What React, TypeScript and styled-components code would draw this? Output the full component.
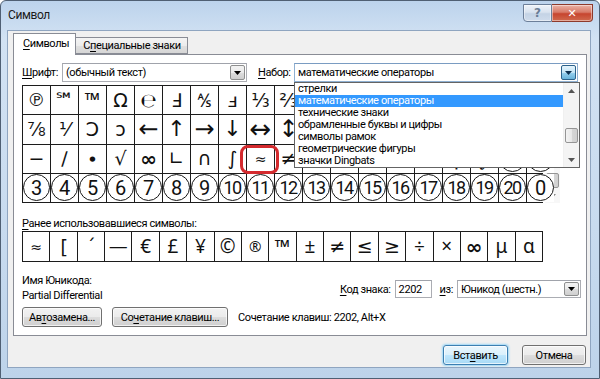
import React from 'react';
import styled, { createGlobalStyle } from 'styled-components';

const UI = `Roboto, "Noto Sans", "DejaVu Sans", sans-serif`;
const SYM = `"DejaVu Sans", "Noto Sans", sans-serif`;

const GlobalStyle = createGlobalStyle`
  html, body { margin: 0; padding: 0; background: #ffffff; }
  * { box-sizing: border-box; }
  u { text-decoration-thickness: 1px; text-underline-offset: 2px; }
`;

const Window = styled.div`
  position: relative;
  width: 600px;
  height: 379px;
  border: 1px solid #4f5f73;
  border-radius: 6px 6px 0 0;
  background: linear-gradient(180deg, #bcd3ec 0%, #d2e2f3 10%, #c8dbef 60%, #bdd3ea 100%);
  padding: 0 8px 10px 6px;
  display: flex;
  flex-direction: column;
  font-family: ${UI};
  font-size: 11px;
  letter-spacing: -0.4px;
  color: #000;
`;

const TitleBar = styled.div`
  height: 29px;
  display: flex;
  align-items: flex-start;
`;

const Title = styled.div`
  margin: 7px 0 0 1px;
  font-size: 12px;
  color: #1a1a1a;
`;

const CaptionGroup = styled.div`
  margin-left: auto;
  margin-right: -2px;
  margin-top: 3px;
  display: flex;
`;

const CaptionButton = styled.div<{ $close?: boolean }>`
  width: ${p => (p.$close ? 41 : 29)}px;
  height: 18px;
  display: flex;
  align-items: center;
  justify-content: center;
  border: 1px solid ${p => (p.$close ? '#8d3a2c' : '#6c7f99')};
  border-left-width: ${p => (p.$close ? 0 : 1)}px;
  border-radius: ${p => (p.$close ? '0 0 4px 0' : '0 0 0 4px')};
  background: ${p =>
    p.$close
      ? 'linear-gradient(180deg, #eab2a6 0%, #d87a68 45%, #c7452f 55%, #d06a4e 100%)'
      : 'linear-gradient(180deg, #eef3f9 0%, #d9e3ef 45%, #c4d3e5 55%, #cfdcec 100%)'};
  color: ${p => (p.$close ? '#ffffff' : '#6a7d96')};
  font-family: ${SYM};
  font-weight: bold;
  letter-spacing: 0;
  font-size: ${p => (p.$close ? 11 : 12)}px;
  box-shadow: inset 0 0 0 1px rgba(255, 255, 255, 0.45);
`;

const Client = styled.div`
  flex: 1;
  background: #f0f0f0;
  border: 1px solid #8fa5c0;
  padding: 2px 3px 0 5px;
  display: flex;
  flex-direction: column;
`;

const TabStrip = styled.div`
  height: 21px;
  display: flex;
  align-items: flex-end;
  position: relative;
  z-index: 1;
`;

const Tab = styled.div<{ $active?: boolean }>`
  height: ${p => (p.$active ? 22 : 17)}px;
  margin-bottom: ${p => (p.$active ? -1 : 0)}px;
  padding: ${p => (p.$active ? '0 6px 2px 9px' : '0 6px 0 7px')};
  border: 1px solid #898c95;
  border-bottom: ${p => (p.$active ? 'none' : '1px solid #898c95')};
  border-left: ${p => (p.$active ? '1px solid #898c95' : 'none')};
  background: ${p => (p.$active ? '#ffffff' : 'linear-gradient(180deg, #f4f4f4 0%, #ececec 50%, #e0e0e0 51%, #d6d6d6 100%)')};
  display: flex;
  align-items: center;
  white-space: nowrap;
`;

const Panel = styled.div`
  height: 282px;
  border: 1px solid #898c95;
  background: #ffffff;
  padding: 8px 5px 0 8px;
  display: flex;
  flex-direction: column;
`;

const FontRow = styled.div`
  height: 19px;
  display: flex;
  align-items: center;
`;

const FieldLabel = styled.span<{ $w: number; $ml?: number }>`
  width: ${p => p.$w}px;
  margin-left: ${p => p.$ml ?? 0}px;
  white-space: nowrap;
`;

const Combo = styled.div<{ $w: number; $open?: boolean; $h?: number; $ml?: number }>`
  position: relative;
  width: ${p => p.$w}px;
  height: ${p => p.$h ?? 19}px;
  margin-left: ${p => p.$ml ?? 0}px;
  border: 1px solid ${p => (p.$open ? '#8fb0d2' : '#abadb3')};
  border-top-color: ${p => (p.$open ? '#7a9cc2' : '#a0a3ab')};
  background: #fff;
  display: flex;
  align-items: center;
  padding-left: 3px;
`;

const ComboText = styled.span`
  flex: 1;
  white-space: nowrap;
  overflow: hidden;
`;

const DropBtn = styled.div<{ $open?: boolean }>`
  width: 15px;
  align-self: stretch;
  margin: 1px;
  display: flex;
  align-items: center;
  justify-content: center;
  border: 1px solid ${p => (p.$open ? '#2c628b' : '#8e8f8f')};
  border-radius: 2px;
  background: ${p =>
    p.$open
      ? 'linear-gradient(180deg, #e5f4fc 0%, #c4e5f6 50%, #98d1ef 51%, #68b3db 100%)'
      : 'linear-gradient(180deg, #f2f2f2 0%, #ebebeb 50%, #dddddd 51%, #cfcfcf 100%)'};
`;

const DropList = styled.div`
  position: absolute;
  top: 18px;
  left: -1px;
  width: 286px;
  height: 86px;
  border: 1px solid #646464;
  background: #fff;
  z-index: 10;
  display: flex;
`;

const ListItems = styled.div`
  flex: 1;
  display: flex;
  flex-direction: column;
`;

const ListItem = styled.div<{ $sel?: boolean }>`
  height: 12px;
  line-height: 12px;
  padding-left: 3px;
  white-space: nowrap;
  background: ${p => (p.$sel ? '#3399ff' : 'transparent')};
  color: ${p => (p.$sel ? '#ffffff' : '#000')};
`;

const VScroll = styled.div`
  width: 16px;
  display: flex;
  flex-direction: column;
  background: #f4f4f4;
  border-left: 1px solid #f0f0f0;
`;

const ScrollArrow = styled.div`
  height: 15px;
  display: flex;
  align-items: center;
  justify-content: center;
`;

const ScrollTrack = styled.div<{ $pos: 'mid' | 'end' }>`
  flex: 1;
  display: flex;
  flex-direction: column;
  justify-content: ${p => (p.$pos === 'end' ? 'flex-end' : 'flex-start')};
  padding-top: ${p => (p.$pos === 'mid' ? 30 : 0)}px;
`;

const ScrollThumb = styled.div<{ $h: number }>`
  height: ${p => p.$h}px;
  margin: 0 1px;
  border: 1px solid #959595;
  border-radius: 2px;
  background: linear-gradient(90deg, #f3f3f3 0%, #e8e8e8 50%, #d6d6d6 51%, #d0d0d0 100%);
`;

const GridArea = styled.div`
  margin-top: 3px;
  display: flex;
  gap: 2px;
`;

const SymbolGrid = styled.div<{ $rows: number; $h: number }>`
  width: 521px;
  height: ${p => p.$h}px;
  display: grid;
  grid-template-columns: repeat(19, 1fr);
  grid-template-rows: repeat(${p => p.$rows}, 1fr);
  gap: 1px;
  background: #1c1c1c;
  border: 1px solid #1c1c1c;
`;

const Cell = styled.div<{ $size?: number; $ui?: boolean; $bold?: boolean }>`
  position: relative;
  background: #ffffff;
  display: flex;
  align-items: center;
  justify-content: center;
  font-family: ${p => (p.$ui ? `"Noto Sans", "DejaVu Sans", sans-serif` : SYM)};
  font-size: ${p => p.$size ?? 19}px;
  font-weight: ${p => (p.$bold ? 700 : 400)};
  letter-spacing: 0;
  line-height: 1;
  color: #111;
  overflow: visible;
`;

const Circled = styled.span<{ $two?: boolean }>`
  width: 27px;
  height: 27px;
  flex: none;
  border: 1.3px solid #151515;
  border-radius: 50%;
  display: flex;
  align-items: center;
  justify-content: center;
  font-family: ${UI};
  font-size: ${p => (p.$two ? 18 : 20)}px;
  letter-spacing: ${p => (p.$two ? -1.5 : 0)}px;
  padding-right: ${p => (p.$two ? 1 : 0)}px;
`;

const Mark = styled.span`
  position: absolute;
  z-index: 5;
  top: 0;
  bottom: -1px;
  left: -7px;
  right: -5px;
  border: 3px solid #d42a2e;
  border-radius: 8px;
  pointer-events: none;
`;

const GridScroll = styled.div`
  width: 15px;
  height: 118px;
  display: flex;
  flex-direction: column;
  background: #f7f7f7;
`;

const SectionLabel = styled.div`
  margin-top: 13px;
  line-height: 15px;
  height: 15px;
`;

const InfoRow = styled.div`
  margin-top: 11px;
  display: flex;
  align-items: flex-start;
  justify-content: space-between;
`;

const InfoCol = styled.div`
  display: flex;
  flex-direction: column;
`;

const InfoLine = styled.div`
  height: 15px;
  line-height: 15px;
`;

const CodeGroup = styled.div`
  margin-top: 7px;
  display: flex;
  align-items: center;
`;

const TextInput = styled.div`
  width: 37px;
  height: 18px;
  margin: 0 8px 0 4px;
  border: 1px solid #abadb3;
  border-top-color: #a0a3ab;
  background: #fff;
  padding-left: 3px;
  display: flex;
  align-items: center;
`;

const ButtonRow = styled.div`
  margin-top: 4px;
  display: flex;
  align-items: center;
  gap: 10px;
`;

const Button = styled.div<{ $w: number; $default?: boolean; $h?: number }>`
  width: ${p => p.$w}px;
  height: ${p => p.$h ?? 20}px;
  border: 1px solid ${p => (p.$default ? '#3c7fb1' : '#707070')};
  border-radius: 3px;
  display: flex;
  align-items: center;
  justify-content: center;
  white-space: nowrap;
  background: ${p =>
    p.$default
      ? 'linear-gradient(180deg, #eaf6fd 0%, #d9f0fc 50%, #bee6fd 51%, #a7d9f5 100%)'
      : 'linear-gradient(180deg, #f2f2f2 0%, #ebebeb 50%, #dddddd 51%, #cfcfcf 100%)'};
  box-shadow: inset 0 0 0 1px rgba(255, 255, 255, 0.7)${p => (p.$default ? ', 0 0 2px 1px #9cd7f7' : '')};
`;

const ShortcutText = styled.span`
  white-space: nowrap;
`;

const Footer = styled.div`
  margin-top: 9px;
  display: flex;
  justify-content: flex-end;
  gap: 14px;
  padding-right: 1px;
`;

const Tri = ({ dir = 'down', color = '#000' }: { dir?: 'down' | 'up'; color?: string }) => (
  <svg width="7" height="4" viewBox="0 0 7 4">
    <path d={dir === 'down' ? 'M0 0h7L3.5 4z' : 'M0 4h7L3.5 0z'} fill={color} />
  </svg>
);

// cells hidden behind the open list are left blank ('')
const row1 = ['℗', '℠', '™', 'Ω', '℮', 'Ⅎ', '⅍', 'ⅎ', '⅓', '⅔', '', '', '', '', '', '', '', '', ''];
const row2 = ['⅞', '⅟', 'Ↄ', 'ↄ', '←', '↑', '→', '↓', '↔', '↕', '', '', '', '', '', '', '', '', ''];
const row3 = ['−', '∕', '∙', '√', '∞', '∟', '∩', '∫', '≈', '≠', '', '', '', '', '', '⌠', '⌡', '#1', '#2'];
const row4 = ['3', '4', '5', '6', '7', '8', '9', '10', '11', '12', '13', '14', '15', '16', '17', '18', '19', '20', '0'];

const recent = ['≈', '[', '´', '—', '€', '£', '¥', '©', '®', '™', '±', '≠', '≤', '≥', '÷', '×', '∞', 'μ', 'α'];

const listItems = [
  'стрелки',
  'математические операторы',
  'технические знаки',
  'обрамленные буквы и цифры',
  'символы рамок',
  'геометрические фигуры',
  'значки Dingbats',
];

const sizeOf: Record<string, number> = {
  '℠': 20,
  '™': 20,
  '®': 15,
  '≈': 14,
  '←': 24,
  '→': 24,
  '↑': 22,
  '↓': 22,
  '↔': 26,
  '↕': 24,
  '℗': 18,
  '∞': 20,
};

const uiGlyphs = new Set(['™', '€', '£', '¥', '©', '®', 'μ', 'α', '[', '±', '÷', '×']);

export default function App() {
  const renderSym = (s: string, key: string, marked = false) => {
    if (s.startsWith('#')) {
      return (
        <Cell key={key}>
          <Circled>{s.slice(1)}</Circled>
        </Cell>
      );
    }
    return (
      <Cell key={key} $size={sizeOf[s] ?? 19} $ui={uiGlyphs.has(s)} $bold={s === '∞'}>
        {s}
        {marked && <Mark />}
      </Cell>
    );
  };

  return (
    <>
      <GlobalStyle />
      <Window>
        <TitleBar>
          <Title>Символ</Title>
          <CaptionGroup>
            <CaptionButton>?</CaptionButton>
            <CaptionButton $close>✕</CaptionButton>
          </CaptionGroup>
        </TitleBar>
        <Client>
          <TabStrip>
            <Tab $active>
              <span>
                <u>С</u>имволы
              </span>
            </Tab>
            <Tab>
              <span>
                С<u>п</u>ециальные знаки
              </span>
            </Tab>
          </TabStrip>
          <Panel>
            <FontRow>
              <FieldLabel $w={40}>
                <u>Ш</u>рифт:
              </FieldLabel>
              <Combo $w={185}>
                <ComboText>(обычный текст)</ComboText>
                <DropBtn>
                  <Tri />
                </DropBtn>
              </Combo>
              <FieldLabel $w={36} $ml={11}>
                <u>Н</u>абор:
              </FieldLabel>
              <Combo $w={284} $open>
                <ComboText>математические операторы</ComboText>
                <DropBtn $open>
                  <Tri color="#0c2f4f" />
                </DropBtn>
                <DropList>
                  <ListItems>
                    {listItems.map((t, i) => (
                      <ListItem key={t} $sel={i === 1}>
                        {t}
                      </ListItem>
                    ))}
                  </ListItems>
                  <VScroll>
                    <ScrollArrow>
                      <Tri dir="up" color="#555" />
                    </ScrollArrow>
                    <ScrollTrack $pos="mid">
                      <ScrollThumb $h={15} />
                    </ScrollTrack>
                    <ScrollArrow>
                      <Tri color="#555" />
                    </ScrollArrow>
                  </VScroll>
                </DropList>
              </Combo>
            </FontRow>

            <GridArea>
              <SymbolGrid $rows={4} $h={118}>
                {row1.map((s, i) => renderSym(s, `a${i}`))}
                {row2.map((s, i) => renderSym(s, `b${i}`))}
                {row3.map((s, i) => renderSym(s, `c${i}`, i === 8))}
                {row4.map((s, i) => (
                  <Cell key={`d${i}`}>
                    <Circled $two={s.length > 1}>{s}</Circled>
                  </Cell>
                ))}
              </SymbolGrid>
              <GridScroll>
                <ScrollArrow>
                  <Tri dir="up" color="#888" />
                </ScrollArrow>
                <ScrollTrack $pos="end">
                  <ScrollThumb $h={15} />
                </ScrollTrack>
                <ScrollArrow>
                  <Tri color="#888" />
                </ScrollArrow>
              </GridScroll>
            </GridArea>

            <SectionLabel>
              <u>Р</u>анее использовавшиеся символы:
            </SectionLabel>
            <SymbolGrid $rows={1} $h={31}>
              {recent.map((s, i) => renderSym(s, `r${i}`))}
            </SymbolGrid>

            <InfoRow>
              <InfoCol>
                <InfoLine>Имя Юникода:</InfoLine>
                <InfoLine>Partial Differential</InfoLine>
              </InfoCol>
              <CodeGroup>
                <span>
                  <u>К</u>од знака:
                </span>
                <TextInput>2202</TextInput>
                <span>
                  <u>и</u>з:
                </span>
                <Combo $w={124} $h={18} $ml={4}>
                  <ComboText>Юникод (шестн.)</ComboText>
                  <DropBtn>
                    <Tri />
                  </DropBtn>
                </Combo>
              </CodeGroup>
            </InfoRow>

            <ButtonRow>
              <Button $w={80}>
                <span>
                  Ав<u>т</u>озамена...
                </span>
              </Button>
              <Button $w={116}>
                <span>
                  Со<u>ч</u>етание клавиш...
                </span>
              </Button>
              <ShortcutText>Сочетание клавиш: 2202, Alt+X</ShortcutText>
            </ButtonRow>
          </Panel>
          <Footer>
            <Button $w={65} $h={20} $default>
              <span>
                Вст<u>а</u>вить
              </span>
            </Button>
            <Button $w={64} $h={20}>
              Отмена
            </Button>
          </Footer>
        </Client>
      </Window>
    </>
  );
}
